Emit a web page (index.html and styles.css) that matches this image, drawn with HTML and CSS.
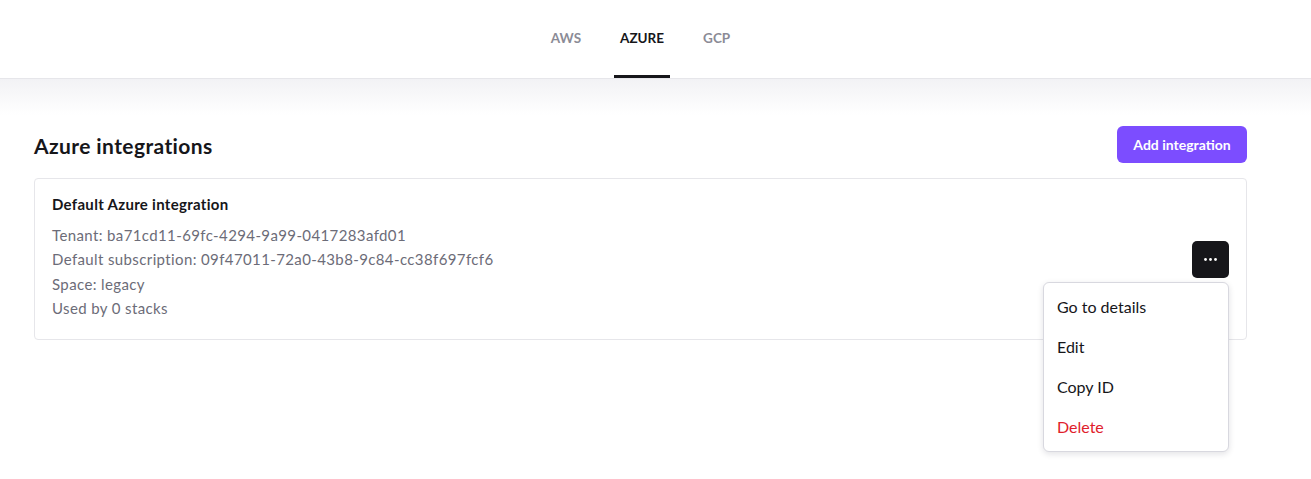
FILE: index.html
```html
<!DOCTYPE html>
<html>
<head>
<meta charset="utf-8">
<link rel="stylesheet" href="styles.css">
</head>
<body>
<header class="topbar">
  <nav class="tabs">
    <a class="tab">AWS</a>
    <a class="tab tab-active">AZURE</a>
    <a class="tab">GCP</a>
  </nav>
</header>
<main class="main">
  <div class="page-head">
    <h1 class="title">Azure integrations</h1>
    <button class="btn-primary">Add integration</button>
  </div>
  <section class="card">
    <div class="card-body">
      <h2 class="card-title">Default Azure integration</h2>
      <ul class="meta">
        <li>Tenant: ba71cd11-69fc-4294-9a99-0417283afd01</li>
        <li>Default subscription: 09f47011-72a0-43b8-9c84-cc38f697fcf6</li>
        <li>Space: legacy</li>
        <li>Used by 0 stacks</li>
      </ul>
    </div>
    <div class="actions">
      <button class="btn-more" aria-label="More">
        <svg width="13" height="3" viewBox="0 0 13 3"><circle cx="1.5" cy="1.5" r="1.4" fill="#fff"/><circle cx="6.5" cy="1.5" r="1.4" fill="#fff"/><circle cx="11.5" cy="1.5" r="1.4" fill="#fff"/></svg>
      </button>
      <div class="menu">
        <div class="menu-item">Go to details</div>
        <div class="menu-item">Edit</div>
        <div class="menu-item">Copy ID</div>
        <div class="menu-item danger">Delete</div>
      </div>
    </div>
  </section>
</main>
</body>
</html>
```
FILE: styles.css
```css
* { box-sizing: border-box; }
html, body { margin: 0; padding: 0; background: #fff; }
body {
  font-family: Lato, "Open Sans", sans-serif;
  color: #16161a;
  height: 479px;
  overflow: hidden;
}
.topbar {
  height: 79px;
  border-bottom: 1px solid #e6e6ea;
  background: #fff;
  display: flex;
  justify-content: center;
  padding-right: 30px;
}
.tabs { display: flex; gap: 27px; height: 78px; }
.tab {
  display: flex;
  align-items: center;
  padding: 0 6px;
  font-size: 13.5px;
  font-weight: 700;
  color: #8b8b96;
  border-bottom: 3px solid transparent;
}
.tab-active { color: #16161a; border-bottom-color: #16161a; }
.main {
  padding: 47px 64px 0 34px;
  background: linear-gradient(#f2f2f5 0px, #ffffff 36px);
}
.page-head {
  display: flex;
  align-items: center;
  justify-content: space-between;
  height: 37px;
}
.title { margin: 0; font-size: 21px; font-weight: 700; line-height: 28px; padding-top: 3px; letter-spacing: 0.4px; }
.btn-primary {
  height: 37px;
  width: 130px;
  border: 0;
  border-radius: 6px;
  background: #7c4dff;
  color: #fff;
  font-family: inherit;
  font-size: 14px;
  font-weight: 700;
  padding-top: 1px;
}
.card {
  margin-top: 15px;
  border: 1px solid #e6e6ea;
  border-radius: 4px;
  height: 162px;
  display: flex;
  align-items: center;
  justify-content: space-between;
  padding: 0 17px;
}
.card-body { align-self: flex-start; padding-top: 14px; }
.card-title { margin: 0; font-size: 15px; font-weight: 700; line-height: 22px; color: #16161a; letter-spacing: 0.3px; }
.meta {
  list-style: none;
  margin: 8px 0 0;
  padding: 0;
  font-size: 15px;
  letter-spacing: 0.38px;
  line-height: 24.4px;
  color: #6c6c78;
}
.actions { position: relative; }
.btn-more {
  width: 37px;
  height: 37px;
  border: 0;
  border-radius: 5px;
  background: #16161a;
  display: flex;
  align-items: center;
  justify-content: center;
  padding: 0;
}
.menu {
  position: absolute;
  right: 0;
  top: 41px;
  width: 186px;
  padding: 4px 0;
  background: #fff;
  border: 1px solid #d8d8df;
  border-radius: 6px;
  box-shadow: 0 2px 6px rgba(20, 20, 40, 0.12);
  z-index: 5;
}
.menu-item {
  height: 40px;
  display: flex;
  align-items: center;
  padding: 0 13px;
  font-size: 16px;
  color: #16161a;
}
.danger { color: #e0202b; }
```
